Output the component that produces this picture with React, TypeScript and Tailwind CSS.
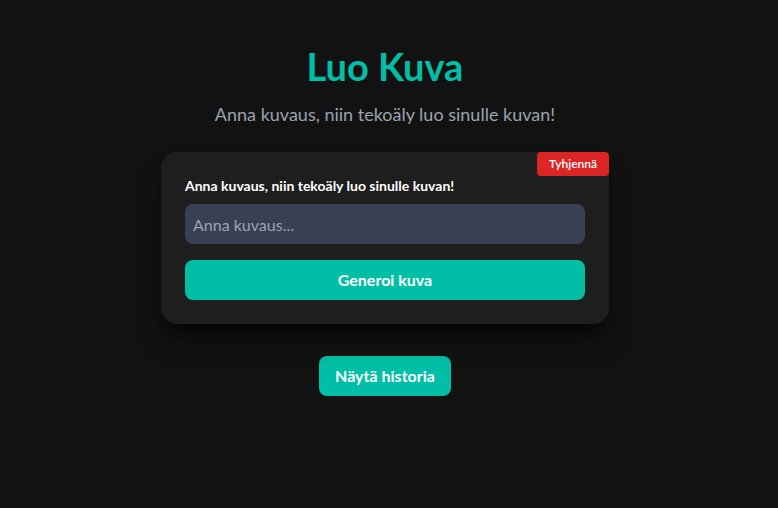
import { useState } from 'react';

export default function App() {
  const [prompt, setPrompt] = useState('');

  return (
    <div
      className="min-h-screen bg-[#121212] text-white flex flex-col items-center pt-[46px] pr-2"
      style={{ fontFamily: 'Lato, "Open Sans", sans-serif' }}
    >
      <h1 className="text-[38px] leading-10 font-bold text-[#00bfa6] mb-[14px]">Luo Kuva</h1>
      <p className="text-lg text-[#9ca3af] mb-6">Anna kuvaus, niin tekoäly luo sinulle kuvan!</p>

      <div className="relative w-[448px] bg-[#1e1e1e] rounded-2xl p-6 shadow-xl shadow-black/50">
        <button className="absolute top-0 right-0 bg-[#dc2626] text-white text-xs font-semibold px-3 py-1 rounded">
          Tyhjennä
        </button>
        <label className="block text-sm font-bold mb-2">Anna kuvaus, niin tekoäly luo sinulle kuvan!</label>
        <input
          value={prompt}
          onChange={(e) => setPrompt(e.target.value)}
          placeholder="Anna kuvaus..."
          className="w-full h-10 px-2 rounded-lg bg-[#374151] text-white placeholder-[#9ca3af] outline-none mb-4"
        />
        <button className="w-full h-10 rounded-lg bg-[#00bfa6] font-bold text-white">Generoi kuva</button>
      </div>

      <button className="mt-8 h-10 px-4 rounded-lg bg-[#00bfa6] font-bold text-white">Näytä historia</button>
    </div>
  );
}
